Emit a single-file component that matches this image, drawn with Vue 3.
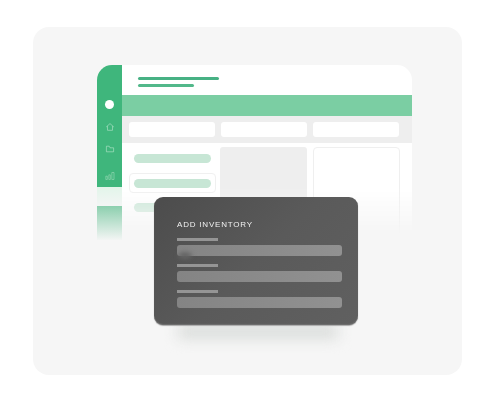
<script setup>
const chips = [1, 2, 3]
const dark = [1, 2, 3]
</script>

<template>
  <div class="page">
    <section class="panel">
      <div class="window">
        <aside class="rail">
          <div class="rail-solid">
            <span class="dot"></span>
            <svg class="ico home" viewBox="0 0 10 10" fill="none" stroke="#b9e6cd" stroke-width=".6">
              <path d="M1.2 5 5 1.6 8.8 5M2.5 4.1V8.3h5V4.1" />
            </svg>
            <svg class="ico folder" viewBox="0 0 10 10" fill="none" stroke="#b9e6cd" stroke-width=".6">
              <path d="M1.4 7.8V2.2h2.8l.8 1.6h3.6v4z" />
            </svg>
            <svg class="ico chart" viewBox="0 0 12 10" fill="none" stroke="#aee0c5" stroke-width=".6">
              <path d="M1 5.2h1.8v4H1zM4.6 3.6h1.8v5.6H4.6zM8.2.8h2.6v8.4H8.2z" />
            </svg>
          </div>
          <div class="rail-pale"></div>
          <div class="rail-fade"></div>
        </aside>
        <div class="main">
          <header class="head">
            <span class="line long"></span>
            <span class="line short"></span>
          </header>
          <div class="band"></div>
          <div class="tools">
            <span v-for="c in chips" :key="c" class="chip"></span>
          </div>
          <div class="content">
            <div class="list">
              <div class="row"><span class="pill"></span></div>
              <div class="row boxed"><span class="pill"></span></div>
              <div class="row"><span class="pill"></span></div>
            </div>
            <div class="grey"></div>
            <div class="blank"></div>
          </div>
        </div>
      </div>

      <div class="shadow"></div>
      <div class="dialog">
        <h2 class="title">ADD INVENTORY</h2>
        <div v-for="d in dark" :key="d" class="group">
          <span class="label"></span>
          <span class="field"></span>
        </div>
        <span class="smudge"></span>
      </div>
    </section>
  </div>
</template>

<style scoped>
.page {
  width: 494px;
  height: 401px;
  padding: 27px 32px 26px 33px;
  box-sizing: border-box;
  background: #fff;
}
.panel {
  position: relative;
  height: 348px;
  padding: 38px 50px 0 64px;
  box-sizing: border-box;
  border-radius: 16px;
  background: #f6f6f6;
}
.window {
  display: flex;
  height: 175px;
  border-radius: 15px 15px 0 0;
  overflow: hidden;
  filter: blur(.3px);
}
.rail {
  flex: 0 0 25px;
  display: flex;
  flex-direction: column;
}
.rail-solid {
  height: 122px;
  flex: none;
  padding-top: 35px;
  box-sizing: border-box;
  display: flex;
  flex-direction: column;
  align-items: center;
  background: #3fb67c;
}
.dot {
  width: 9px;
  height: 9px;
  border-radius: 50%;
  background: #fff;
}
.ico {
  width: 10px;
  height: 10px;
}
.home {
  margin-top: 13px;
}
.folder {
  margin-top: 12px;
}
.chart {
  margin-top: 17px;
}
.rail-pale {
  height: 19px;
  flex: none;
  background: linear-gradient(#e2f5ea, #f3f5f4);
}
.rail-fade {
  flex: 1;
  background: linear-gradient(#8ccfae, #f3f5f4);
}
.main {
  flex: 1;
  display: flex;
  flex-direction: column;
  background: #fff;
  -webkit-mask-image: linear-gradient(#000 0, #000 70%, transparent 97%);
  mask-image: linear-gradient(#000 0, #000 70%, transparent 97%);
}
.head {
  height: 30px;
  flex: none;
  padding: 12px 0 0 16px;
  box-sizing: border-box;
  display: flex;
  flex-direction: column;
  gap: 3.5px;
}
.line {
  height: 3px;
  border-radius: 2px;
}
.long {
  width: 81px;
  background: #47b184;
}
.short {
  width: 56px;
  background: #52b88a;
}
.band {
  height: 21px;
  flex: none;
  background: #7bcea3;
}
.tools {
  height: 27px;
  flex: none;
  padding: 6px 13px 6px 7px;
  box-sizing: border-box;
  display: flex;
  gap: 6px;
  background: #eeeeee;
}
.chip {
  flex: 1;
  border-radius: 3px;
  background: #fff;
}
.content {
  flex: 1;
  display: flex;
  padding: 4px 12px 0 7px;
}
.list {
  width: 87px;
  flex: none;
  margin-right: 4px;
  padding-top: 1px;
}
.row {
  height: 20px;
  margin-bottom: 4.5px;
  padding: 5.5px 5px;
  box-sizing: border-box;
}
.boxed {
  border: 1px solid #f0f0f0;
  border-radius: 4px;
  padding: 5px 4px;
}
.pill {
  display: block;
  height: 9px;
  border-radius: 5px;
  background: #c7e6d5;
}
.grey {
  width: 87px;
  flex: none;
  margin-right: 5.5px;
  border-radius: 3px;
  background: #eeeeee;
}
.blank {
  flex: 1;
  border: 1px solid #efefef;
  border-radius: 4px;
  background: #fff;
}
.shadow {
  position: absolute;
  left: 145px;
  top: 297px;
  width: 160px;
  height: 15px;
  background: #dadddb;
  filter: blur(7px);
}
.dialog {
  position: absolute;
  left: 121px;
  top: 170px;
  width: 204px;
  height: 128px;
  padding: 23px 16px 0 23px;
  box-sizing: border-box;
  border-radius: 9px;
  background: linear-gradient(135deg, #4c4c4c, #5a5a5a 50%, #606060);
  box-shadow: inset 0 -1px 1px #6f6f6f, 0 1px 1px #aaa;
  filter: blur(.25px);
}
.title {
  margin: 0 0 8px;
  font: 400 8px/10px "Liberation Sans", Arial, sans-serif;
  letter-spacing: .8px;
  color: #f0f0f0;
}
.group {
  display: block;
  margin-bottom: 8px;
}
.label {
  display: block;
  width: 41px;
  height: 3px;
  margin-bottom: 4px;
  background: #959595;
}
.field {
  display: block;
  height: 11px;
  border-radius: 3px;
  background: linear-gradient(90deg, #848484, #919191);
}
.smudge {
  position: absolute;
  left: 24px;
  top: 55px;
  width: 14px;
  height: 7px;
  border-radius: 50%;
  background: #646464;
  filter: blur(2px);
}
</style>
